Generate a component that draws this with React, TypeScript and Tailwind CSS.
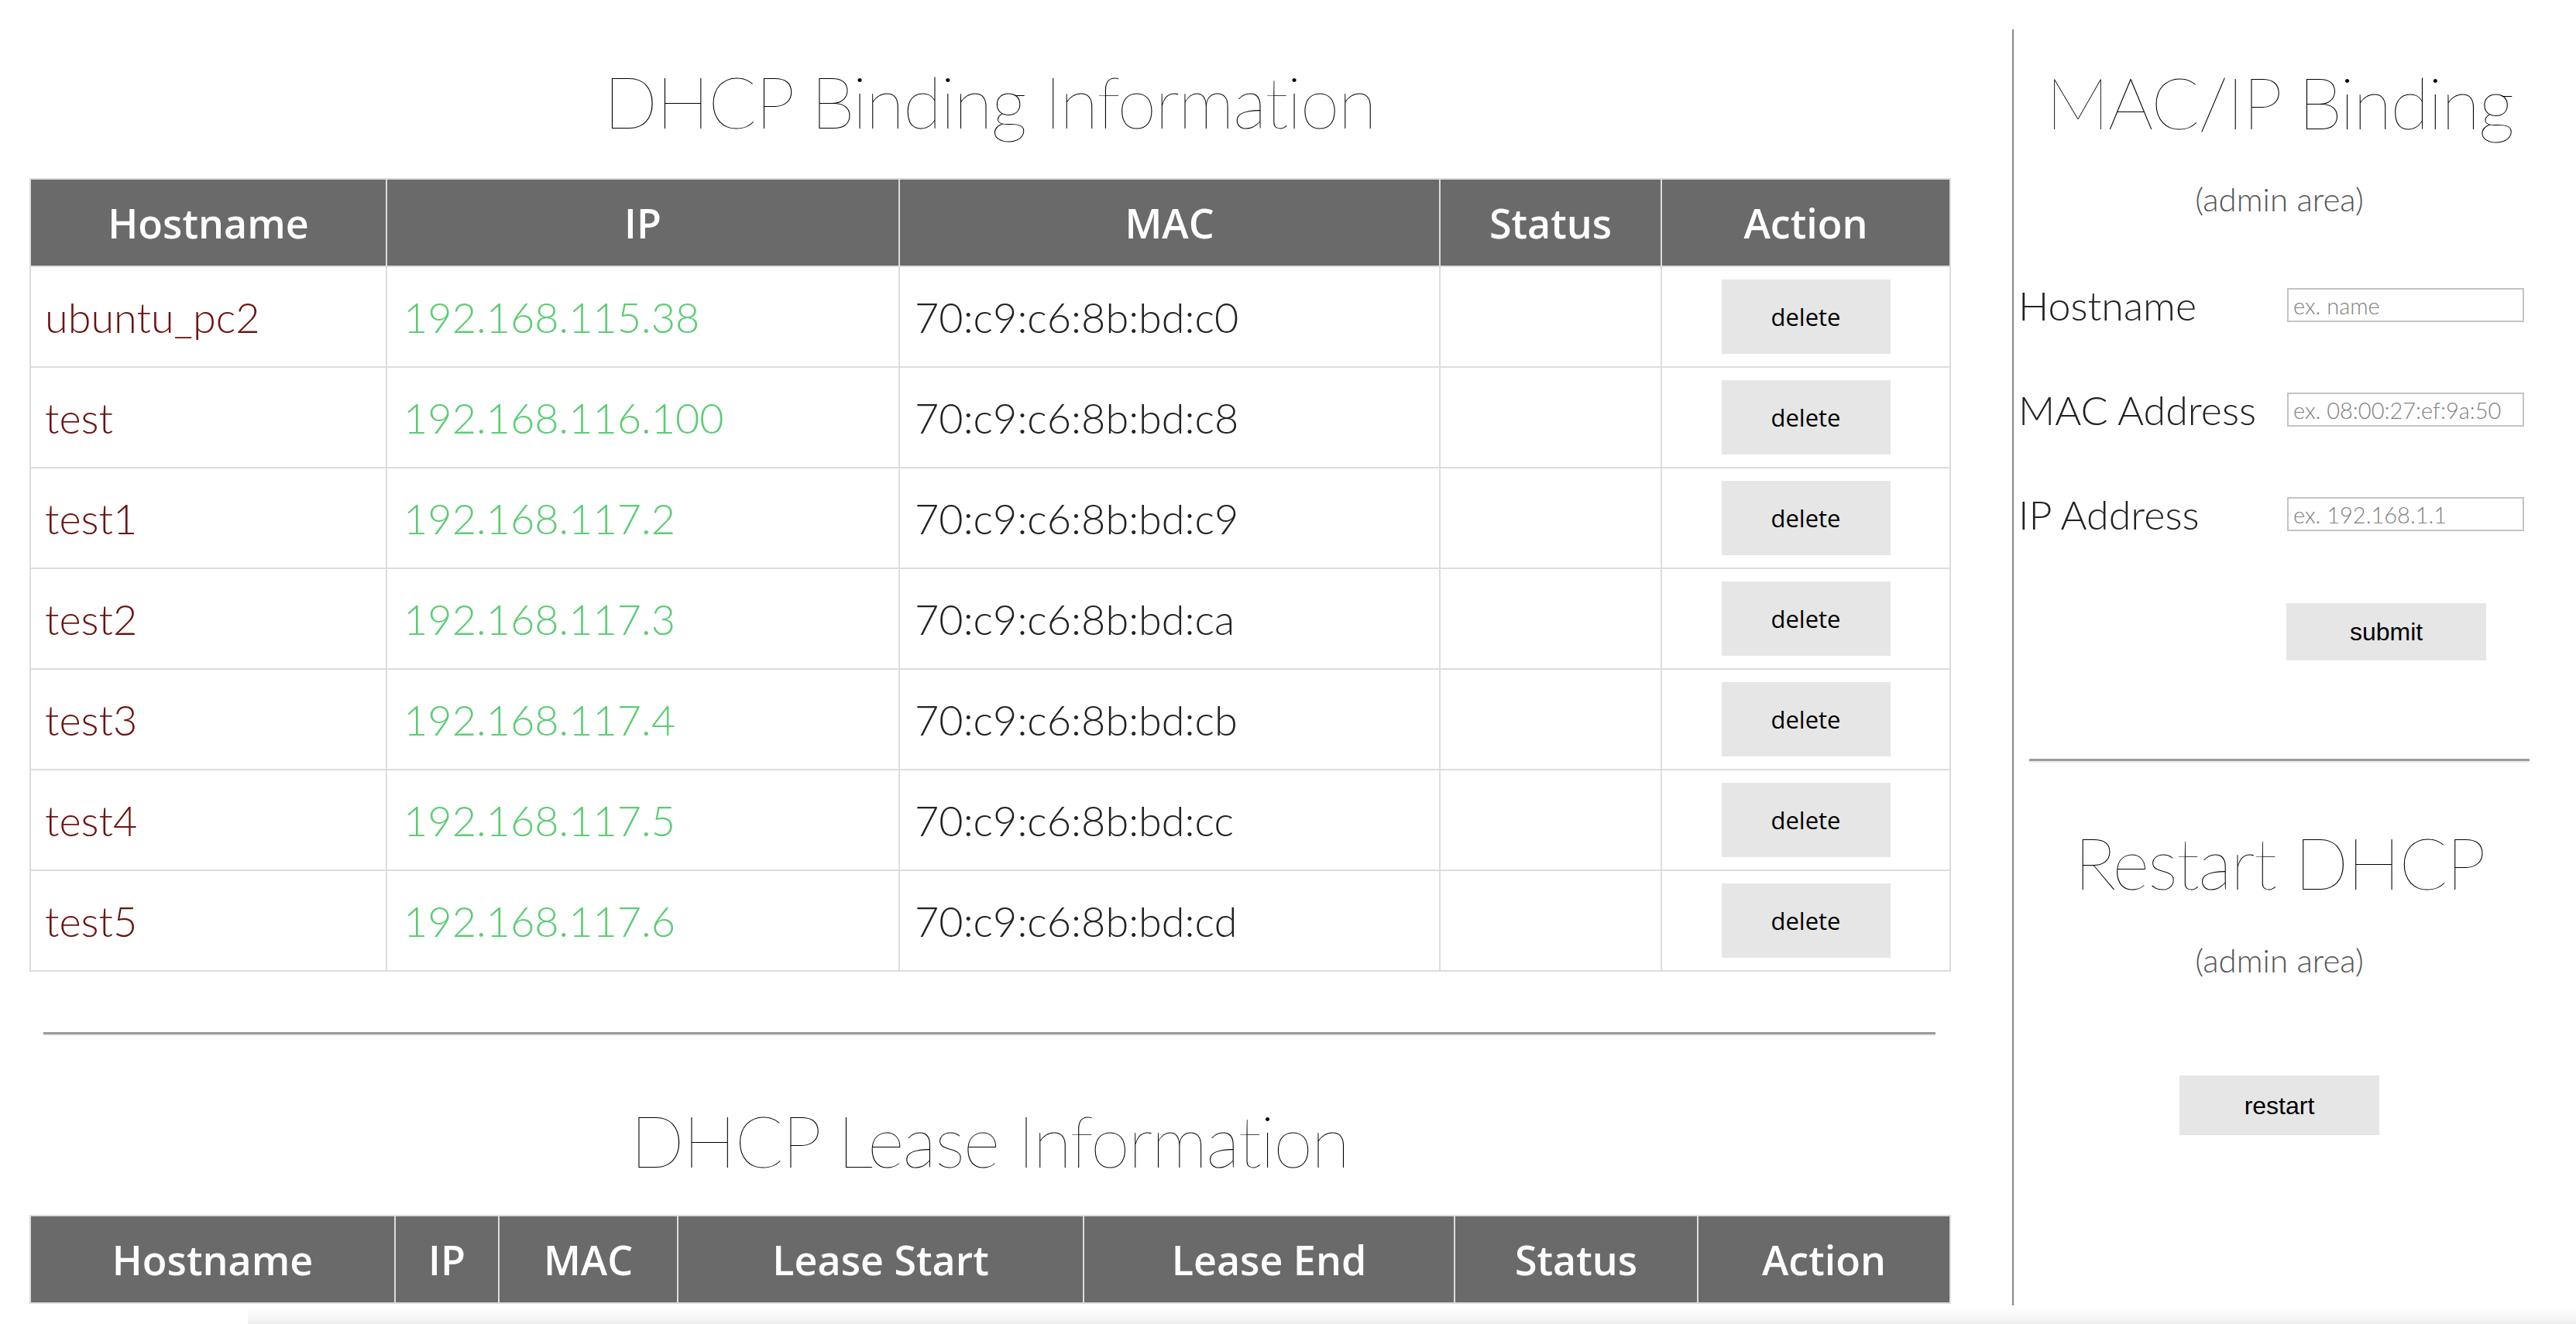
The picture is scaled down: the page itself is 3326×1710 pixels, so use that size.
import React from "react";

const lato = "font-['Lato','Helvetica_Neue','Liberation_Sans',sans-serif]";
const bold = "font-['Open_Sans','Noto_Sans',sans-serif]";

const bindings = [
  { host: "ubuntu_pc2", ip: "192.168.115.38", mac: "70:c9:c6:8b:bd:c0" },
  { host: "test", ip: "192.168.116.100", mac: "70:c9:c6:8b:bd:c8" },
  { host: "test1", ip: "192.168.117.2", mac: "70:c9:c6:8b:bd:c9" },
  { host: "test2", ip: "192.168.117.3", mac: "70:c9:c6:8b:bd:ca" },
  { host: "test3", ip: "192.168.117.4", mac: "70:c9:c6:8b:bd:cb" },
  { host: "test4", ip: "192.168.117.5", mac: "70:c9:c6:8b:bd:cc" },
  { host: "test5", ip: "192.168.117.6", mac: "70:c9:c6:8b:bd:cd" },
];

const bindingCols = [
  { name: "Hostname", w: "w-[460px]" },
  { name: "IP", w: "w-[662px]" },
  { name: "MAC", w: "w-[698px]" },
  { name: "Status", w: "w-[286px]" },
  { name: "Action", w: "w-[373px]" },
];

const leaseCols = [
  { name: "Hostname", w: "w-[471px]" },
  { name: "IP", w: "w-[134px]" },
  { name: "MAC", w: "w-[231px]" },
  { name: "Lease Start", w: "w-[524px]" },
  { name: "Lease End", w: "w-[479px]" },
  { name: "Status", w: "w-[314px]" },
  { name: "Action", w: "w-[326px]" },
];

function HeadRow({ cols }: { cols: { name: string; w: string }[] }) {
  return (
    <thead>
      <tr>
        {cols.map((c) => (
          <th
            key={c.name}
            className={`${c.w} h-[113px] border-2 border-[#dddddd] bg-[#6a6a6a] text-center align-middle text-[52px] font-semibold text-white ${bold}`}
          >
            {c.name}
          </th>
        ))}
      </tr>
    </thead>
  );
}

function Title({ children }: { children: React.ReactNode }) {
  return (
    <h1
      className={`text-center text-[92px] leading-none font-extralight tracking-[-0.02em] whitespace-nowrap text-black ${lato}`}
    >
      {children}
    </h1>
  );
}

function Field({ label, placeholder }: { label: string; placeholder: string }) {
  return (
    <div className="flex h-[44px] items-center">
      <label className={`w-[347px] text-[52px] leading-none font-light whitespace-nowrap text-[#222222] ${lato}`}>
        {label}
      </label>
      <input
        placeholder={placeholder}
        className={`h-[44px] w-[306px] border-2 border-[#c4c4c4] px-[6px] text-[29px] font-light outline-none placeholder:text-[#808080] ${lato}`}
      />
    </div>
  );
}

export default function App() {
  return (
    <div className="relative flex h-[1710px] w-[3326px] overflow-hidden bg-white">
      <div className="flex w-[2598px] flex-col pl-[38px] pr-[81px]">
        <div className="mt-[85px] mb-[53px]">
          <Title>DHCP Binding Information</Title>
        </div>

        <table className="w-[2479px] table-fixed border-collapse">
          <HeadRow cols={bindingCols} />
          <tbody>
            {bindings.map((b) => (
              <tr key={b.host}>
                <td className={`h-[130px] border-2 border-[#dddddd] px-[18px] text-[54px] font-light text-[#6b1410] ${lato}`}>
                  {b.host}
                </td>
                <td className={`border-2 border-[#dddddd] px-[21px] text-[54px] font-light text-[#5ccc74] ${lato}`}>
                  {b.ip}
                </td>
                <td className={`border-2 border-[#dddddd] px-[19px] text-[54px] font-light text-[#222222] ${lato}`}>
                  {b.mac}
                </td>
                <td className="border-2 border-[#dddddd]"></td>
                <td className="border-2 border-[#dddddd] text-center">
                  <button className={`h-[96px] w-[218px] bg-[#e6e6e6] text-[31px] text-black ${bold}`}>
                    delete
                  </button>
                </td>
              </tr>
            ))}
          </tbody>
        </table>

        <hr className="mx-[18px] mt-[78px] border-0 border-t-[3px] border-b-2 border-t-[#9a9a9a] border-b-[#eeeeee]" />

        <div className="mt-[89px] mb-[50px]">
          <Title>DHCP Lease Information</Title>
        </div>

        <table className="w-[2479px] table-fixed border-collapse">
          <HeadRow cols={leaseCols} />
        </table>
      </div>

      <div className="mt-[38px] flex h-[1648px] w-[728px] flex-col border-l-2 border-[#888888] pl-[6px] pr-[60px]">
        <div className="mt-[48px] pl-[14px]">
          <Title>MAC/IP Binding</Title>
        </div>
        <p className={`mt-[58px] pl-[14px] text-center text-[42px] leading-none font-light text-[#555555] ${lato}`}>
          (admin area)
        </p>

        <div className="mt-[94px] flex flex-col gap-[91px]">
          <Field label="Hostname" placeholder="ex. name" />
          <Field label="MAC Address" placeholder="ex. 08:00:27:ef:9a:50" />
          <Field label="IP Address" placeholder="ex. 192.168.1.1" />
        </div>

        <button className="mt-[93px] ml-[346px] h-[74px] w-[258px] bg-[#e6e6e6] font-['Liberation_Sans',sans-serif] text-[32px] text-black">
          submit
        </button>

        <hr className="mt-[127px] ml-[14px] border-0 border-t-[3px] border-b-2 border-t-[#9a9a9a] border-b-[#eeeeee]" />

        <div className="mt-[83px] pl-[14px]">
          <Title>Restart DHCP</Title>
        </div>
        <p className={`mt-[59px] pl-[14px] text-center text-[42px] leading-none font-light text-[#555555] ${lato}`}>
          (admin area)
        </p>

        <div className="mt-[128px] flex justify-center pl-[14px]">
          <button className="h-[77px] w-[258px] bg-[#e6e6e6] font-['Liberation_Sans',sans-serif] text-[32px] text-black">
            restart
          </button>
        </div>
      </div>

      <div className="pointer-events-none absolute right-0 bottom-0 left-[320px] h-[22px] bg-linear-to-b from-white/0 to-[#efefef]" />
    </div>
  );
}
